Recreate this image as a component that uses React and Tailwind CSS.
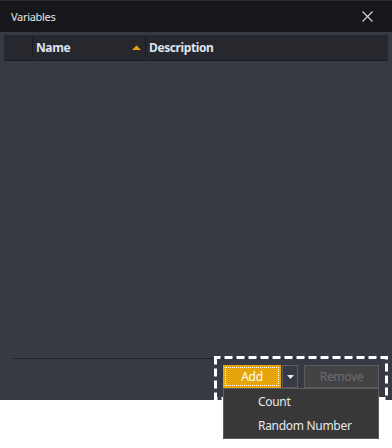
import React from "react";

export default function App() {
  return (
    <div className="w-[392px] h-[448px] bg-white relative" style={{ fontFamily: '"Noto Sans", "Open Sans", sans-serif' }}>
      <div className="h-[400px] flex flex-col bg-[#373a42]">
        {/* Title bar */}
        <div className="h-[32px] bg-[#16171b] flex items-center justify-between pl-[11px] pr-[19px] border-t border-[#2a2b30]">
          <span className="text-[11px] tracking-[-0.3px] text-[#e6e6e6] leading-none">Variables</span>
          <svg width="11" height="11" viewBox="0 0 11 11">
            <path d="M0.5 0.5 L10.5 10.5 M10.5 0.5 L0.5 10.5" stroke="#d8d8d8" strokeWidth="1.1" />
          </svg>
        </div>
        {/* Body */}
        <div className="flex-1 flex flex-col">
          <div className="mx-[4px] mt-[3px] h-[26px] bg-[#27282e] border-b border-[#1b1c20] flex items-stretch text-[12px] font-bold tracking-[-0.4px] text-[#dde4ee]">
            <div className="w-[29px] flex items-center border-r border-[#1a1b1f] my-[2px]"></div>
            <div className="w-[113px] flex items-center justify-between pl-[3px] pr-[4px] border-r border-[#1a1b1f] my-[2px]">
              <span>Name</span>
              <svg width="9" height="5" viewBox="0 0 9 5" className="mt-[-1px]">
                <path d="M0 5 L4.5 0.5 L9 5 Z" fill="#e4a510" />
              </svg>
            </div>
            <div className="flex items-center pl-[3px]">
              <span>Description</span>
            </div>
          </div>
          <div className="flex-1"></div>
          <div className="mx-[13px] h-[1px] bg-[#202226]"></div>
          <div className="flex justify-end pr-[13px] pt-[6px] pb-[12px]">
            <div className="relative flex items-stretch h-[23px]">
              <button className="w-[58px] h-[23px] bg-[#e6a50a] p-[2px] flex">
                <span className="flex-1 flex items-center justify-center border border-dotted border-white text-[12px] tracking-[-0.3px] text-white leading-none">Add</span>
              </button>
              <button className="ml-[1px] w-[16px] h-[23px] border border-[#5c5e63] flex items-center justify-center">
                <svg width="7" height="4" viewBox="0 0 7 4">
                  <path d="M0 0 L7 0 L3.5 4 Z" fill="#e8e8e8" />
                </svg>
              </button>
              <button className="ml-[6px] w-[75px] h-[23px] bg-[#434345] border border-[#5c5c5e] flex items-center justify-center text-[12px] tracking-[-0.3px] text-[#6d6d70] leading-none">Remove</button>
              <svg className="absolute left-[-9px] top-[-9px]" width="174" height="44" viewBox="0 0 174 44">
                <rect x="1.5" y="1.5" width="171" height="41" fill="none" stroke="#ffffff" strokeWidth="3" strokeDasharray="8 4" strokeDashoffset="3" />
              </svg>
              <div className="absolute left-0 top-[23px] w-[156px] h-[51px] bg-[#383838] border border-[#5d5d5d] flex flex-col pt-[1px] text-[12px] tracking-[-0.3px] text-[#e4e8ee]">
                <div className="h-[24px] flex items-center pl-[34px]">Count</div>
                <div className="h-[24px] flex items-center pl-[34px]">Random Number</div>
              </div>
            </div>
          </div>
        </div>
      </div>
    </div>
  );
}
